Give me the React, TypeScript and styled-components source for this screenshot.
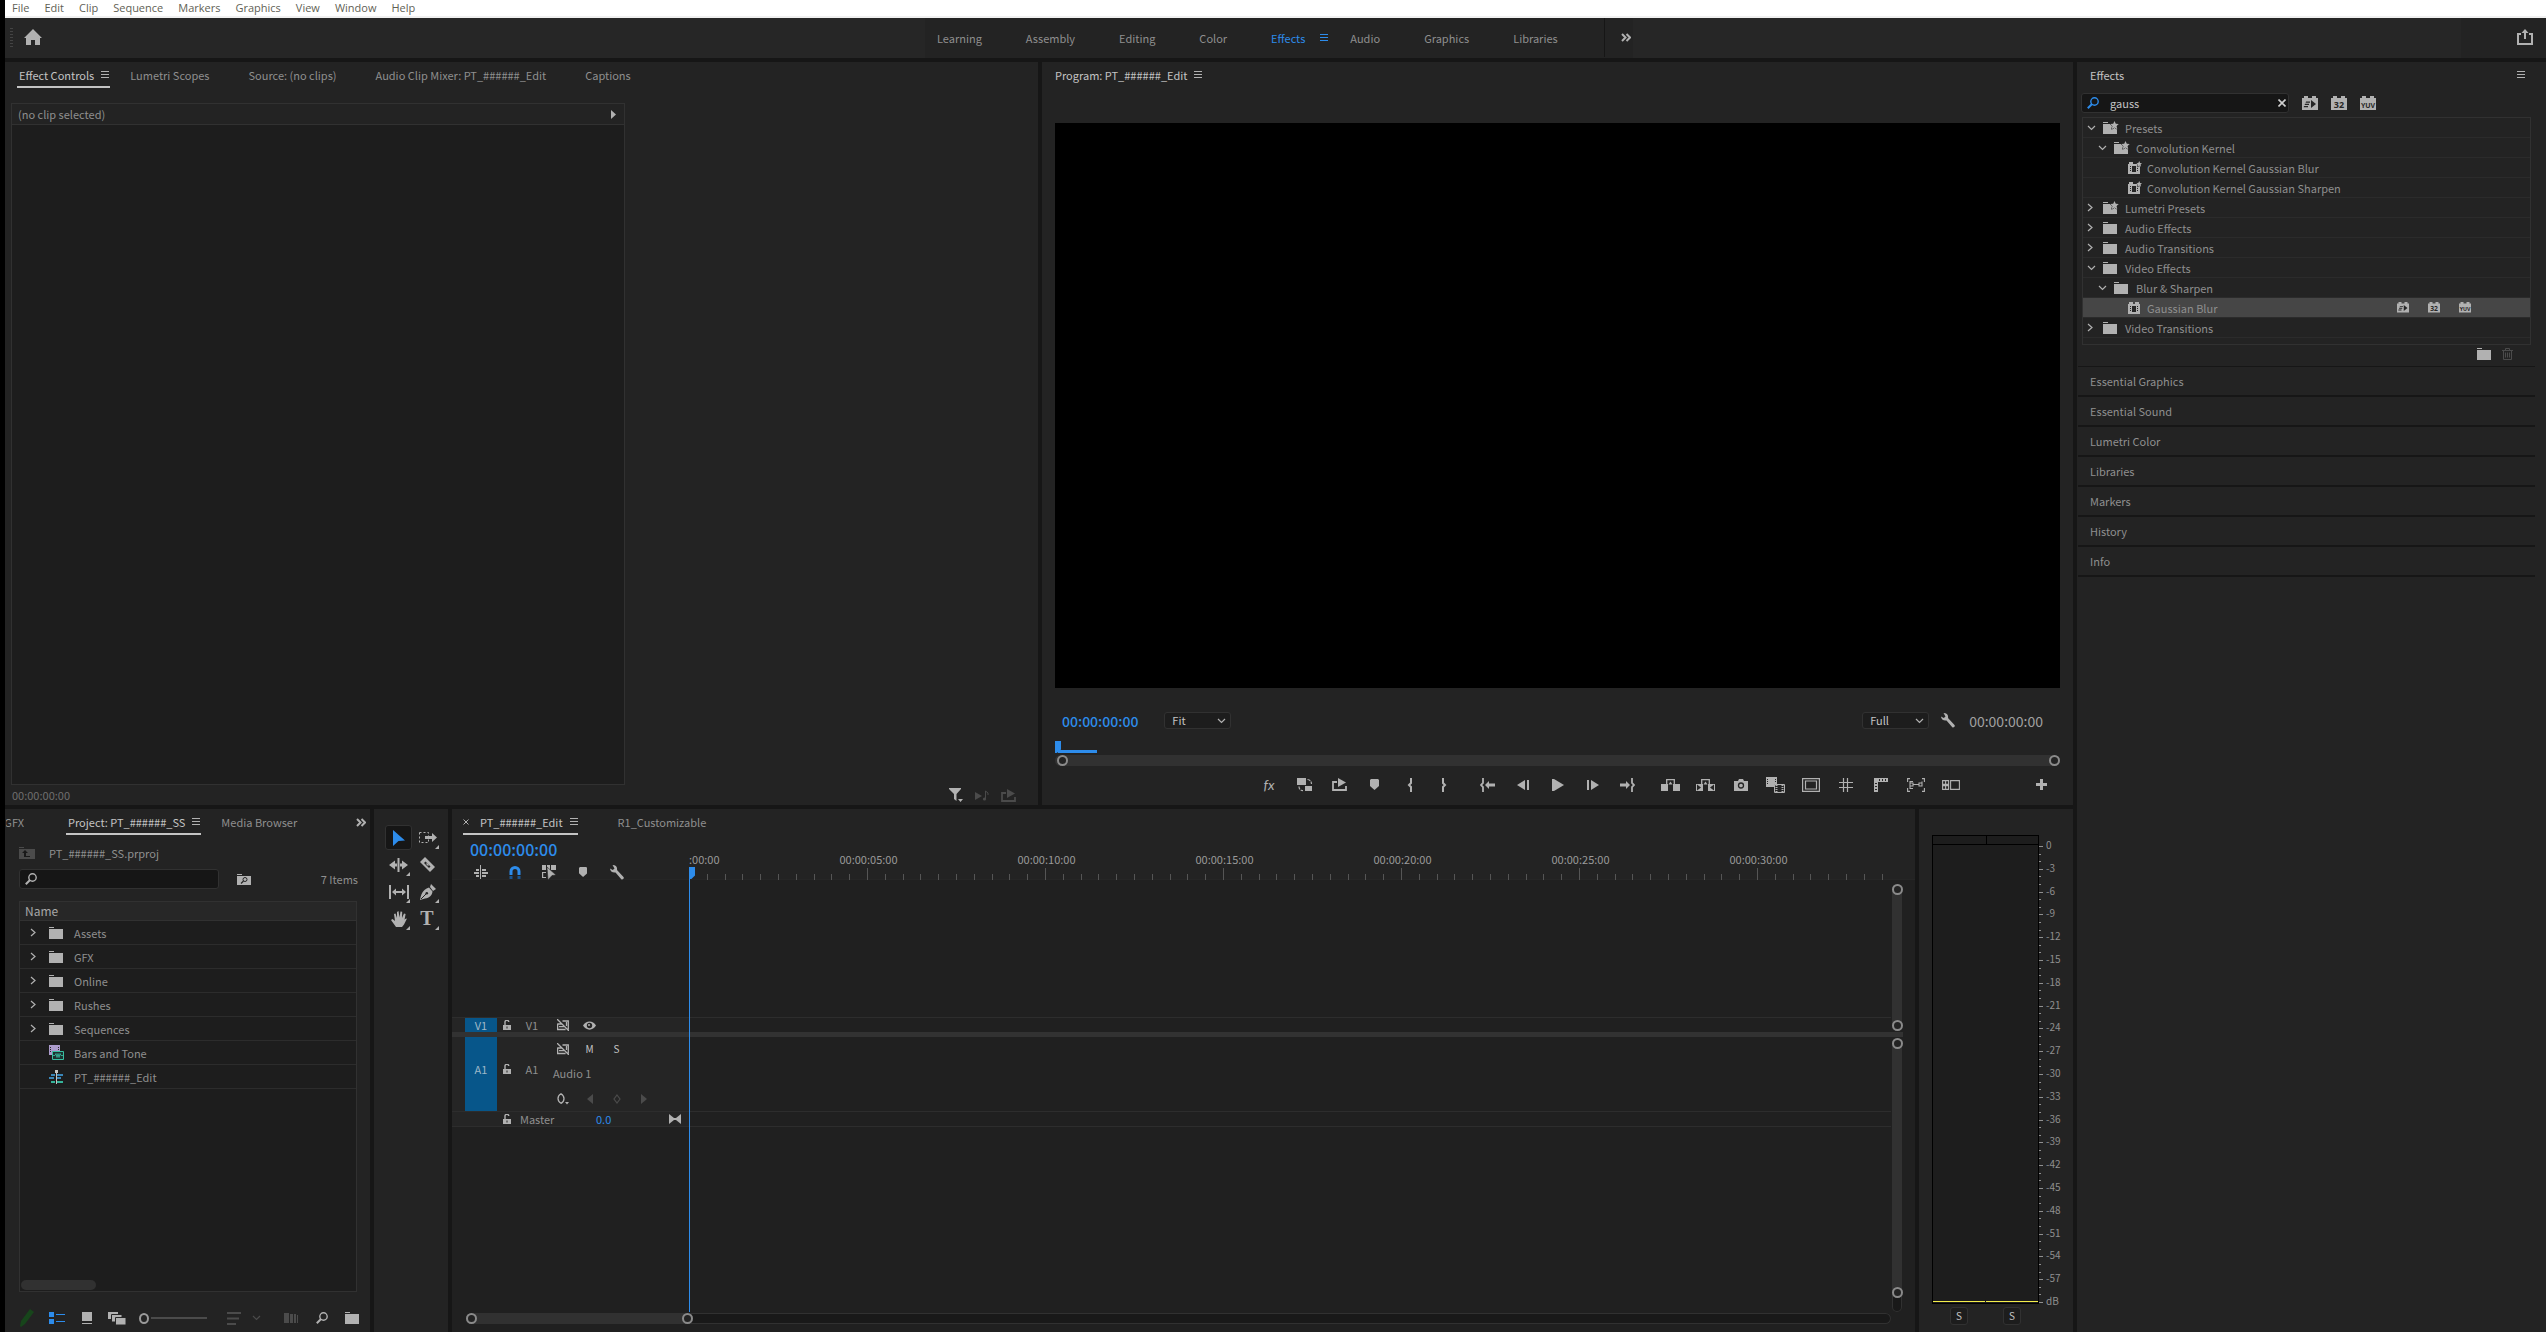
import React from "react";
import styled, { createGlobalStyle, css } from "styled-components";

const color = {
  panel: "#232323",
  bar: "#262626",
  gap: "#161616",
  well: "#1d1d1d",
  line: "#313131",
  text: "#8f8f8f",
  bright: "#c4c4c4",
  icon: "#b1b1b1",
  dim: "#4b4b4b",
  blue: "#2d8ceb",
};

const uiFont = `"Noto Sans CJK SC", "Open Sans", sans-serif`;

const Global = createGlobalStyle`
  *, *::before, *::after { box-sizing: border-box; }
  body { margin: 0; background: ${color.gap}; }
  body, button, input, select, table {
    font-family: ${uiFont};
    font-size: 11px;
    line-height: 16px;
    color: ${color.text};
  }
  button { background: none; border: 0; padding: 0; margin: 0; cursor: default; }
  ul { list-style: none; margin: 0; padding: 0; }
  svg { display: block; flex: none; }
`;

/* ---------- icons ---------- */

type IconDef = { w: number; h: number; art: React.ReactNode };
const dark = "#262626";
const brick = <path d="M0 2h2V0h4v2h4V0h4v2h2v12H0z" />;
const brickText = (size: number, label: string) => (
  <text x="8" y="12" textAnchor="middle" fontFamily="Open Sans, sans-serif" fontWeight="700" fontSize={size} fill={dark}>
    {label}
  </text>
);

const icons: Record<string, IconDef> = {
  home: { w: 18, h: 16, art: <path d="M9 0 18 9h-2v7h-5v-5H7v5H2V9H0z" /> },
  share: {
    w: 16, h: 16,
    art: <><path d="M4 5H1v10h14V5h-3" fill="none" stroke="currentColor" strokeWidth="2" /><path d="M8 0l3.5 4H9v6H7V4H4.5z" /></>,
  },
  menu: { w: 8, h: 8, art: <path d="M0 0h8v1H0zM0 3h8v1H0zM0 6h8v1H0z" /> },
  more: { w: 10, h: 9, art: <path d="M1 1l3.5 3.5L1 8M5.5 1 9 4.5 5.500 8" fill="none" stroke="currentColor" strokeWidth="2" /> },
  right: { w: 6, h: 9, art: <path d="M1 1l4 3.5L1 8" fill="none" stroke="currentColor" strokeWidth="1.2" /> },
  down: { w: 9, h: 6, art: <path d="M1 1l3.5 3.5L8 1" fill="none" stroke="currentColor" strokeWidth="1.2" /> },
  tri: { w: 5, h: 9, art: <path d="M0 0l5 4.5L0 9z" /> },
  triLeft: { w: 6, h: 10, art: <path d="M6 0v10L0 5z" /> },
  triRight: { w: 6, h: 10, art: <path d="M0 0v10l6-5z" /> },
  folder: { w: 14, h: 12, art: <path d="M0 0h5v1H0zM0 2h14v10H0z" /> },
  starFolder: {
    w: 16, h: 13,
    art: <><path d="M0 1h5v1H0zM0 3h14v10H0z" /><path d="M11.500 0l1.300 2.700 3 .3-2.300 2 .8 3.200-2.800-1.700-2.800 1.700.8-3.200-2.300-2 3-.3z" stroke={color.panel} strokeWidth="1" paintOrder="stroke" /></>,
  },
  upFolder: {
    w: 16, h: 12,
    art: <><path d="M0 0h5v1H0zM0 2h16v10H0z" /><path d="M3 6l3-3 3 3H7v3h4v1H5V6z" fill="#191919" /></>,
  },
  findFolder: {
    w: 14, h: 11,
    art: <><path d="M0 0h5v1H0zM0 2h14v9H0z" /><circle cx="8" cy="5.500" r="2" fill="none" stroke={dark} /><path d="M6.500 7 4 9.500" stroke={dark} strokeWidth="1.300" /></>,
  },
  effect: {
    w: 12, h: 12,
    art: <><path d="M0 2h1V0h4v2h2V0h4v2h1v10H0z" /><path d="M2 4h1v1H2zM2 6h1v1H2zM2 8h1v1H2zM9 4h1v1H9zM9 6h1v1H9zM9 8h1v1H9zM4 4h4v6H4z" fill={dark} /></>,
  },
  starEffect: {
    w: 14, h: 13,
    art: <><path d="M0 3h1V1h4v2h7v10H0z" /><path d="M2 5h1v1H2zM2 7h1v1H2zM2 9h1v1H2zM9 7h1v1H9zM9 9h1v1H9zM4 5h4v6H4z" fill={dark} /><path d="M11.200 0l.9 2 1.900.2-1.400 1.400.4 2.200-1.800-1.200L9.400 5.800l.4-2.200-1.400-1.400 1.900-.2z" stroke={color.panel} strokeWidth="1" paintOrder="stroke" /></>,
  },
  accel: {
    w: 16, h: 14,
    art: <>{brick}<path d="M9 4l5 4-5 4zM4 5.500h4v1.200H3.600zM3 7.700h4v1.200H2.600zM2 10h4v1.200H1.700z" fill={dark} /></>,
  },
  bits: { w: 16, h: 14, art: <>{brick}{brickText(9, "32")}</> },
  yuv: { w: 16, h: 14, art: <>{brick}{brickText(7, "YUV")}</> },
  search: {
    w: 12, h: 12,
    art: <><circle cx="7.500" cy="4.500" r="3.700" fill="none" stroke="currentColor" strokeWidth="1.400" /><path d="M5 7 .8 11.300" stroke="currentColor" strokeWidth="2" /></>,
  },
  close: { w: 8, h: 8, art: <path d="M.5.5l7 7M7.500.5l-7 7" stroke="currentColor" strokeWidth="1.600" /> },
  closeTab: { w: 6, h: 6, art: <path d="M.5.5l5 5M5.500.5l-5 5" stroke="currentColor" /> },
  trash: {
    w: 11, h: 12,
    art: <path d="M0 2.500h11M3.500 2V.5h4V2M1.500 3v8.500h8V3M3.500 4.500v5M5.500 4.500v5M7.500 4.500v5" fill="none" stroke="currentColor" />,
  },
  filter: { w: 14, h: 14, art: <path d="M0 0h12v1L7.500 6v7L5 11V6L0 1zM9 11h5l-2.500 3z" /> },
  playNote: { w: 14, h: 11, art: <><path d="M0 2l7 4-7 4z" /><path d="M10.500 9V1l2.500 2v2" fill="none" stroke="currentColor" /><circle cx="9.500" cy="9" r="1.600" /></> },
  exportClip: { w: 15, h: 13, art: <><path d="M5 4H1v8h13V8" fill="none" stroke="currentColor" strokeWidth="1.800" /><path d="M6 0l8 4.500L6 9z" /></> },
  fx: {
    w: 24, h: 24,
    art: <text x="11" y="17" textAnchor="middle" fontFamily="Lato, sans-serif" fontStyle="italic" fontSize="14">fx</text>,
  },
  proxy: {
    w: 16, h: 14,
    art: <><path d="M0 0h9v7H0zM8 8h7v5H8z" /><path d="M10.500 1.500c2.500.2 4 2 4 4.500M2 8.500c0 2.500 1.500 4 4 4.200" fill="none" stroke="currentColor" strokeWidth="1.200" strokeDasharray="3 1" /></>,
  },
  marker: { w: 9, h: 11, art: <path d="M0 1l1-1h7l1 1v6l-4.500 4L0 7z" /> },
  braceL: { w: 5, h: 14, art: <path d="M4 0v5L2 7l2 2v5" fill="none" stroke="currentColor" strokeWidth="2" /> },
  braceR: { w: 5, h: 14, art: <path d="M1 0v5l2 2-2 2v5" fill="none" stroke="currentColor" strokeWidth="2" /> },
  goIn: { w: 15, h: 14, art: <><path d="M3 0v5L1 7l2 2v5" fill="none" stroke="currentColor" strokeWidth="1.800" /><path d="M5 7l4-4v2.500h6v3H9V11z" /></> },
  goOut: { w: 15, h: 14, art: <><path d="M12 0v5l2 2-2 2v5" fill="none" stroke="currentColor" strokeWidth="1.800" /><path d="M10 7L6 3v2.500H0v3h6V11z" /></> },
  stepBack: { w: 12, h: 10, art: <path d="M8 0v10L0 5zM10 0h2v10h-2z" /> },
  stepFwd: { w: 12, h: 10, art: <path d="M4 0v10l8-5zM0 0h2v10H0z" /> },
  play: { w: 12, h: 12, art: <path d="M0 0h2l10 6-10 6H0z" /> },
  lift: {
    w: 19, h: 12,
    art: <><path d="M0 5h7v7H0zM12 5h7v7h-7z" /><path d="M5.700 6V.7h7.600V6" fill="none" stroke="currentColor" strokeWidth="1.300" /><path d="M9.500 2.500l2 3h-4z" /></>,
  },
  extract: {
    w: 19, h: 12,
    art: <><path d="M0 5h7v7H0zM12 5h7v7h-7z" /><path d="M5.700 6V.7h7.600V6" fill="none" stroke="currentColor" strokeWidth="1.300" /><path d="M9.500 2.500l2 3h-4z" /><path d="M1 5.500l4 3-4 3zM18 5.500l-4 3 4 3z" fill={dark} /></>,
  },
  camera: { w: 14, h: 12, art: <><path d="M0 2h4l1-2h4l1 2h4v10H0z" /><circle cx="7" cy="6.500" r="2.500" fill="none" stroke={dark} strokeWidth="1.300" /></> },
  compare: {
    w: 19, h: 16,
    art: <><path d="M0 0h11v10H0z" /><path d="M1 2h1v1H1zM1 4h1v1H1zM1 6h1v1H1zM9 2h1v1H9zM9 4h1v1H9z" fill={dark} /><path d="M8.500 7.500h10v8h-10z" fill={dark} stroke="currentColor" /><path d="M10.500 8v7M16.500 8v7" fill="none" stroke="currentColor" strokeDasharray="1 1" strokeWidth="2" /></>,
  },
  safe: { w: 18, h: 14, art: <path d="M.6.6h16.800v12.800H.6zM3.500 3h11v8h-11z" fill="none" stroke="currentColor" strokeWidth="1.200" /> },
  grid: { w: 14, h: 14, art: <path d="M4.500 0v14M8.500 0v14M0 4.500h14M0 9.500h14" fill="none" stroke="currentColor" strokeWidth="1.200" /> },
  rulers: { w: 14, h: 14, art: <><path d="M0 0h14v4H4v10H0z" /><path d="M5 1h1v2H5zM8 1h1v2H8zM11 1h1v2h-1zM1 5h2v1H1zM1 8h2v1H1zM1 11h2v1H1z" fill={dark} /></> },
  vr: {
    w: 18, h: 14,
    art: <path d="M3 .6H.6V4M15 .6h2.400V4M.6 10v3.400H3M17.400 10v3.400H15M6 3.500H3v7h3M3 5h3v3H3M12 5h3v3h-3zM6 6.500h6M15 3.500v3" fill="none" stroke="currentColor" strokeWidth="1.100" />,
  },
  multicam: { w: 18, h: 10, art: <path d="M.6.6h6v3.800h-6zM.6 5.600h6v3.800h-6zM3.600.6v8.800M8.600.6h8.800v8.800H8.600z" fill="none" stroke="currentColor" strokeWidth="1.100" /> },
  plus: { w: 11, h: 11, art: <path d="M4 0h3v4h4v3H7v4H4V7H0V4h4z" /> },
  wrench: {
    w: 14, h: 15,
    art: <path d="M2.500 0C6 0 7.500 2 7 5l6.500 7c1 1.200-1 3.200-2.200 2.200L5.500 7.500C2.500 8 0 6 0 3.500l2.800 1.600 1.700-1.600z" />,
  },
  pencil: { w: 14, h: 18, art: <path d="M10 0l4 3-9 12-4 3-1-1 1-5z" fill="#17451b" /> },
  list: { w: 16, h: 12, art: <path d="M0 0h5v5H0zM0 7h5v5H0zM7 2h9v1H7zM7 9h9v1H7z" /> },
  thumb: { w: 10, h: 13, art: <path d="M0 0h10v9H0zM0 11h10v1H0z" /> },
  freeform: {
    w: 18, h: 13,
    art: <><path d="M0 0h10v7H0z" /><path d="M3.500 2.500h10.500V10H3.500z" stroke={dark} /><path d="M7.500 5.500H18V13H7.500z" stroke={dark} /></>,
  },
  sort: { w: 14, h: 13, art: <path d="M0 0h14v2H0zM0 5.500h12v2H0zM0 11h9v2H0z" /> },
  automate: { w: 15, h: 10, art: <path d="M0 0h5v10H0zM6 1h3v9H6zM10 1h2v9h-2zM13 2h1v8h-1z" /> },
  barsTone: {
    w: 15, h: 15,
    art: <><path d="M0 0h11v10H0z" fill="#ab9bcb" /><path d="M1 2h1v1H1zM1 4h1v1H1zM1 6h1v1H1zM9 2h1v1H9zM9 4h1v1H9z" fill={dark} /><path d="M3.500 6.500h11v8h-11z" fill="#1d3330" stroke="#38c0a2" /><path d="M4 10.500h2l1-2 1 4 1-4 1 4 1-4 1 2h2" fill="none" stroke="#38c0a2" strokeWidth=".8" /></>,
  },
  sequence: {
    w: 14, h: 14,
    art: <><path d="M2 4h4v2H2zM0 7h5v2H0zM8 7h4v2H8zM8 4h6v2H8z" fill="#3a86b8" /><path d="M2 11h4v2H2zM8 11h6v2H8z" fill="#35b39a" /><path d="M6 0h3v3H8v11H7V3H6z" fill="#c4c4c4" /></>,
  },
  nest: { w: 14, h: 14, art: <path d="M2 4h3v2H2zM0 7h5v2H0zM2 10h3v2H2zM8 4h4v2H8zM8 7h6v2H8zM8 10h4v2H8zM6 0h1v14H6z" /> },
  magnet: { w: 12, h: 13, art: <><path d="M2 9V5.500a4 4 0 0 1 8 0V9" fill="none" stroke="currentColor" strokeWidth="3" /><path d="M.5 10h3v3h-3zM8.500 10h3v3h-3z" fill="#1a5590" /></> },
  linked: { w: 14, h: 15, art: <><path d="M0 0h4v5H0zM5 0h3v5H5zM9 0h5v5H9z" /><path d="M4 7.500H.6v5H4" fill="none" stroke="currentColor" strokeWidth="1.200" /><path d="M5 2l9 8-4 .5L6 15z" stroke={dark} strokeWidth=".6" /></> },
  arrow: { w: 12, h: 16, art: <path d="M0 0l12 10.500-6.500.5L0 16z" /> },
  trackSelect: { w: 18, h: 12, art: <><path d="M.5.5h9v10h-9z" fill="none" stroke="currentColor" strokeDasharray="2 2" /><path d="M6 4h7V1l5 4.500L13 10V7H6z" /></> },
  ripple: { w: 19, h: 14, art: <path d="M8.500 0h2v14h-2zM0 7l6-4.500v3h2v3H6v3zM19 7l-6-4.500v3h-2v3h2v3z" /> },
  razor: { w: 15, h: 15, art: <><path d="M5 0l10 10-5 5L0 5z" /><path d="M5.500 4.500l5 5-1.500 1.500-5-5z" fill={dark} /><path d="M6.500 6.500l2 2" stroke="currentColor" strokeWidth="1.200" /></> },
  slip: { w: 20, h: 14, art: <path d="M0 0h2v14H0zM18 0h2v14h-2zM3 7l4-3.500V6h6V3.500L17 7l-4 3.500V8H7v2.500z" /> },
  pen: { w: 16, h: 16, art: <><path d="M11 0l5 5-3 2-3-4zM9 3.500L12.500 7.500c-.5 4-3 6.500-7.500 7L0 16c1-5 2-10 9-12.500z" /><path d="M1 15l5-5" stroke={dark} /><circle cx="6.800" cy="9.300" r="1.300" fill={dark} /></> },
  hand: { w: 16, h: 16, art: <path d="M5 16L0 9l1.500-1L4 10 3 3l1.500-.5L6 7V1l1.500-1L8.500 6.500 9.500.5l1.700.2L11 7l2-4.500 1.600.4L13.500 9l.5-1 2-.5-3 6-2 2.500z" /> },
  type: {
    w: 25, h: 25,
    art: <text x="12" y="19" textAnchor="middle" fontFamily="Liberation Serif, serif" fontWeight="700" fontSize="20">T</text>,
  },
  lock: { w: 8, h: 10, art: <><path d="M0 5h8v5H0z" /><path d="M2 5V2.500A1.800 1.800 0 0 1 5.800 2" fill="none" stroke="currentColor" strokeWidth="1.400" /><path d="M3.500 6.500h1v2h-1z" fill={dark} /></> },
  syncLock: { w: 12, h: 12, art: <path d="M.6 4.500v6h8M.6 5h4M2 7.700h5M5.500 2h5.800v8.500M9.500 3v4M0 0l12 12" fill="none" stroke="currentColor" strokeWidth="1.300" /> },
  eye: { w: 13, h: 9, art: <><path d="M0 4.500C3-1 10-1 13 4.500 10 10 3 10 0 4.500z" /><circle cx="6.500" cy="4.500" r="2.700" fill={dark} /><circle cx="6" cy="4" r="1" /></> },
  keyframe: { w: 12, h: 12, art: <><path d="M4 .8c4 2.500 4 7.500 0 9.500C0 8 0 3 4 .8z" fill="none" stroke="currentColor" strokeWidth="1.300" /><path d="M8 9h4l-2 2.500z" /></> },
  diamond: { w: 8, h: 10, art: <path d="M4 1l3 4-3 4-3-4z" fill="none" stroke="currentColor" strokeWidth="1.200" /> },
  bowtie: { w: 12, h: 10, art: <path d="M0 0l5 4h2l5-4v10L7 6H5l-5 4z" /> },
};

const Svg = styled.svg<{ $tone?: string }>`
  fill: currentColor;
  color: ${(p) => p.$tone || color.icon};
`;

const Icon = ({ name, tone, scale = 1 }: { name: string; tone?: string; scale?: number }) => {
  const { w, h, art } = icons[name];
  return (
    <Svg $tone={tone} width={w * scale} height={h * scale} viewBox={`0 0 ${w} ${h}`} aria-hidden="true">
      {art}
    </Svg>
  );
};

/* ---------- shared parts ---------- */

const Shell = styled.div`
  min-height: 100vh;
  display: flex;
  flex-direction: column;
  border-left: 5px solid #000;
`;

const MenuBar = styled.nav`
  display: flex;
  gap: 15px;
  height: 18px;
  padding-left: 7px;
  background: #fff;
  border-bottom: 2px solid #f0f0f0;
`;

const MenuItem = styled.button`
  font-family: "Open Sans", sans-serif;
  color: #5f5f55;
`;

const TopBar = styled.header`
  display: grid;
  grid-template-columns: 920fr 708px 913fr;
  height: 40px;
  background: ${color.bar};
`;

const TopLeft = styled.div`
  display: flex;
  align-items: center;
  gap: 11px;
  padding: 0 0 2px 5px;
`;

const Grip = styled.div`
  width: 3px;
  height: 19px;
  background: repeating-linear-gradient(#444 0 1px, transparent 1px 3px);
`;

const Workspaces = styled.nav`
  display: flex;
  align-items: center;
  padding: 0 0 1px 12px;
  background: ${color.panel};
`;

const WorkspaceButton = styled.button<{ $active?: boolean }>`
  display: flex;
  align-items: center;
  gap: 15px;
  margin-right: ${(p) => (p.$active ? 22 : 44)}px;
  color: ${(p) => (p.$active ? color.blue : color.text)};
`;

const Overflow = styled.div`
  display: flex;
  align-items: center;
  justify-content: flex-end;
  width: 29px;
  height: 100%;
  margin-left: auto;
  padding-right: 2px;
  border-left: 1px solid ${color.gap};
`;

const TopRight = styled.div`
  display: flex;
  align-items: center;
  justify-content: flex-end;
  justify-self: end;
  width: 85px;
  padding: 0 13px 2px 0;
  background: ${color.panel};
`;

const Workspace = styled.main`
  flex: 1;
  display: grid;
  grid-template-columns: minmax(0, 1fr) 469px;
  gap: 4px;
  padding-top: 4px;
`;

const Stack = styled.div`
  display: flex;
  flex-direction: column;
  gap: 4px;
`;

const UpperRow = styled.div`
  flex: 743 1 0;
  display: grid;
  grid-template-columns: 1033fr 1031fr;
  gap: 4px;
`;

const LowerRow = styled.div`
  flex: 523 1 0;
  display: grid;
  grid-template-columns: 365px 74px minmax(0, 1fr) 154px;
  gap: 4px;
`;

const Panel = styled.section`
  display: flex;
  flex-direction: column;
  min-width: 0;
  overflow: hidden;
  background: ${color.panel};
`;

const TabBar = styled.div<{ $left: number }>`
  display: flex;
  gap: 1px;
  height: 26px;
  flex: none;
  padding-left: ${(p) => p.$left}px;
`;

const Tab = styled.button<{ $active?: boolean; $underline?: boolean }>`
  display: flex;
  align-items: center;
  gap: 7px;
  height: 26px;
  padding: 2px ${(p) => (p.$active ? 0 : 19)}px 0;
  white-space: nowrap;
  color: ${(p) => (p.$active ? color.bright : color.text)};
  border-bottom: 2px solid ${(p) => (p.$underline ? color.bright : "transparent")};
  ${(p) => p.$underline && css`padding-left: 2px; padding-right: 1px;`}
`;

const Spacer = styled.div`
  flex: 1;
`;

const IconButton = styled.button<{ $w?: number; $h?: number }>`
  display: flex;
  align-items: center;
  justify-content: center;
  width: ${(p) => (p.$w ? `${p.$w}px` : "auto")};
  height: ${(p) => (p.$h ? `${p.$h}px` : "auto")};
  flex: none;
`;

const Knob = styled.div`
  width: 11px;
  height: 11px;
  flex: none;
  border: 2px solid #8a8a8a;
  border-radius: 50%;
  background: ${color.panel};
`;

const SearchBox = styled.label<{ $w: number; $gap: number }>`
  display: flex;
  align-items: center;
  gap: ${(p) => p.$gap}px;
  width: ${(p) => p.$w}px;
  height: 20px;
  padding: 0 2px 0 5px;
  background: ${color.gap};
  border: 1px solid ${color.line};
  border-radius: 3px;
`;

const SearchInput = styled.input`
  flex: 1;
  min-width: 0;
  padding: 0;
  border: 0;
  outline: 0;
  background: none;
  color: ${color.bright};
`;

const Gapped = styled.div<{ $w: number }>`
  width: ${(p) => p.$w}px;
  flex: none;
`;

/* ---------- effect controls ---------- */

const ClipWell = styled.div`
  display: flex;
  flex-direction: column;
  flex: 1;
  width: 59.4%;
  margin: 15px 0 0 6px;
  background: ${color.well};
  border: 1px solid ${color.line};
`;

const ClipHead = styled.div`
  display: flex;
  align-items: center;
  justify-content: space-between;
  height: 21px;
  padding: 0 8px 0 6px;
  background: ${color.panel};
  border-bottom: 1px solid ${color.line};
`;

const ClipFoot = styled.div`
  display: flex;
  align-items: center;
  gap: 12px;
  height: 20px;
  padding: 0 22px 0 7px;
  color: #6f6f6f;
`;

const EffectControls = () => (
  <Panel>
    <TabBar $left={12}>
      <Tab $active $underline>Effect Controls<Icon name="menu" /></Tab>
      <Tab>Lumetri Scopes</Tab>
      <Tab>Source: (no clips)</Tab>
      <Tab>Audio Clip Mixer: PT_######_Edit</Tab>
      <Tab>Captions</Tab>
    </TabBar>
    <ClipWell>
      <ClipHead>(no clip selected)<Icon name="tri" /></ClipHead>
    </ClipWell>
    <ClipFoot>
      00:00:00:00
      <Spacer />
      <IconButton aria-label="Filter properties"><Icon name="filter" /></IconButton>
      <IconButton aria-label="Play audio"><Icon name="playNote" tone={color.dim} /></IconButton>
      <IconButton aria-label="Export clip"><Icon name="exportClip" tone={color.dim} /></IconButton>
    </ClipFoot>
  </Panel>
);

/* ---------- program monitor ---------- */

const Monitor = styled.div`
  flex: 1;
  margin: 35px 13px 0;
  background: #000;
`;

const MonitorBar = styled.div`
  display: flex;
  align-items: center;
  height: 18px;
  margin: 24px 13px 0;
  padding: 0 17px 1px 7px;
`;

const Timecode = styled.span<{ $size: number; $blue?: boolean }>`
  font-size: ${(p) => p.$size}px;
  font-weight: ${(p) => (p.$blue ? 500 : 400)};
  color: ${(p) => (p.$blue ? color.blue : "#a0a0a0")};
`;

const SelectBox = styled.div`
  position: relative;
  width: 67px;
  height: 17px;
  svg { position: absolute; right: 5px; top: 6px; pointer-events: none; }
`;

const Select = styled.select`
  appearance: none;
  display: block;
  width: 100%;
  height: 17px;
  padding: 0 7px;
  line-height: 15px;
  color: ${color.bright};
  background: ${color.well};
  border: 1px solid ${color.line};
  border-radius: 3px;
`;

const Dropdown = ({ label, value }: { label: string; value: string }) => (
  <SelectBox>
    <Select aria-label={label} defaultValue={value}><option>{value}</option></Select>
    <Icon name="down" />
  </SelectBox>
);

const MiniRuler = styled.div`
  display: flex;
  align-items: flex-end;
  height: 12px;
  margin: 11px 13px 2px;
`;

const PlayMarker = styled.div`
  width: 6px;
  height: 12px;
  background: ${color.blue};
  clip-path: polygon(0 0, 100% 0, 100% 70%, 30% 100%, 0 100%);
`;

const WorkLine = styled.div`
  width: 39px;
  height: 3px;
  margin-left: -3px;
  background: ${color.blue};
`;

const MiniScroll = styled.div`
  display: flex;
  justify-content: space-between;
  height: 11px;
  margin: 0 13px;
  padding: 0 0 0 2px;
  background: ${color.line};
  border-radius: 6px;
`;

const Transport = styled.div`
  display: flex;
  align-items: center;
  height: 39px;
  padding: 0 23px 2px 20.4%;
`;

const Group = styled.div`
  display: flex;
  margin-right: 8px;
`;

const transport = [
  ["fx", "proxy", "exportClip", "marker", "braceL", "braceR"],
  ["goIn", "stepBack", "play", "stepFwd", "goOut"],
  ["lift", "extract", "camera", "compare", "safe", "grid", "rulers", "vr", "multicam"],
];

const Program = () => (
  <Panel>
    <TabBar $left={13}>
      <Tab $active>Program: PT_######_Edit<Icon name="menu" /></Tab>
    </TabBar>
    <Monitor />
    <MonitorBar>
      <Timecode $size={14} $blue>00:00:00:00</Timecode>
      <Gapped $w={26} />
      <Dropdown label="Zoom level" value="Fit" />
      <Spacer />
      <Dropdown label="Playback resolution" value="Full" />
      <Gapped $w={12} />
      <IconButton aria-label="Settings"><Icon name="wrench" /></IconButton>
      <Gapped $w={14} />
      <Timecode $size={14}>00:00:00:00</Timecode>
    </MonitorBar>
    <MiniRuler><PlayMarker /><WorkLine /></MiniRuler>
    <MiniScroll><Knob /><Knob /></MiniScroll>
    <Transport>
      {transport.map((names, i) => (
        <Group key={i}>
          {names.map((n) => (
            <IconButton key={n} $w={35} $h={24} aria-label={n}><Icon name={n} /></IconButton>
          ))}
        </Group>
      ))}
      <Spacer />
      <IconButton $w={18} $h={18} aria-label="Button editor"><Icon name="plus" /></IconButton>
    </Transport>
  </Panel>
);

/* ---------- effects ---------- */

const EffectsTitle = styled.div`
  display: flex;
  align-items: center;
  justify-content: space-between;
  height: 31px;
  padding: 0 21px 5px 13px;
  color: ${color.bright};
`;

const SearchRow = styled.div`
  display: flex;
  align-items: center;
  gap: 13px;
  padding-left: 4px;
`;

const Tree = styled.ul`
  && { margin: 4px 15px 0 5px; padding-bottom: 6px; }
  border: 1px solid ${color.line};
`;

const TreeRow = styled.li<{ $level: number; $on?: boolean }>`
  display: flex;
  align-items: center;
  height: 20px;
  padding-left: ${(p) => 4 + p.$level * 11}px;
  padding-right: 59px;
  border-bottom: 1px solid #2b2b2b;
  background: ${(p) => (p.$on ? "#464646" : "none")};
`;

const Twist = styled.button`
  width: 16px;
  height: 16px;
  flex: none;
  display: flex;
  align-items: center;
`;

const Glyph = styled.span<{ $leaf: boolean }>`
  width: ${(p) => (p.$leaf ? 19 : 22)}px;
  flex: none;
`;

const Badges = styled.span`
  display: flex;
  gap: 19px;
  margin-left: auto;
`;

const tree: [number, string, string, string][] = [
  [0, "down", "starFolder", "Presets"],
  [1, "down", "starFolder", "Convolution Kernel"],
  [2, "", "starEffect", "Convolution Kernel Gaussian Blur"],
  [2, "", "starEffect", "Convolution Kernel Gaussian Sharpen"],
  [0, "right", "starFolder", "Lumetri Presets"],
  [0, "right", "folder", "Audio Effects"],
  [0, "right", "folder", "Audio Transitions"],
  [0, "down", "folder", "Video Effects"],
  [1, "down", "folder", "Blur & Sharpen"],
  [2, "", "effect", "Gaussian Blur"],
  [0, "right", "folder", "Video Transitions"],
];

const EffectsFoot = styled.div`
  display: flex;
  align-items: center;
  justify-content: flex-end;
  gap: 11px;
  height: 21px;
  padding: 0 33px 3px 0;
`;

const Drawers = styled.div`
  margin: 0 11px 0 1px;
  border-top: 1px solid ${color.gap};
`;

const Drawer = styled.button`
  display: block;
  width: 100%;
  height: 30px;
  padding: 0 12px;
  text-align: left;
  border-bottom: 2px solid ${color.gap};
`;

const drawers = ["Essential Graphics", "Essential Sound", "Lumetri Color", "Libraries", "Markers", "History", "Info"];

const Effects = () => (
  <Panel>
    <EffectsTitle>Effects<IconButton aria-label="Panel menu"><Icon name="menu" /></IconButton></EffectsTitle>
    <SearchRow>
      <SearchBox $w={208} $gap={11}>
        <Icon name="search" tone={color.blue} />
        <SearchInput aria-label="Search effects" defaultValue="gauss" />
        <IconButton aria-label="Clear search"><Icon name="close" tone="#d0d0d0" /></IconButton>
      </SearchBox>
      <IconButton $w={16} aria-label="Accelerated effects"><Icon name="accel" /></IconButton>
      <IconButton $w={16} aria-label="32-bit effects"><Icon name="bits" /></IconButton>
      <IconButton $w={16} aria-label="YUV effects"><Icon name="yuv" /></IconButton>
    </SearchRow>
    <Tree>
      {tree.map(([level, twist, glyph, label]) => (
        <TreeRow key={label} $level={level} $on={label === "Gaussian Blur"}>
          {twist ? <Twist aria-label={`Toggle ${label}`}><Icon name={twist} /></Twist> : <Gapped $w={19} />}
          <Glyph $leaf={level === 2}><Icon name={glyph} /></Glyph>
          {label}
          {label === "Gaussian Blur" && (
            <Badges><Icon name="accel" scale={0.75} /><Icon name="bits" scale={0.75} /><Icon name="yuv" scale={0.75} /></Badges>
          )}
        </TreeRow>
      ))}
    </Tree>
    <EffectsFoot>
      <IconButton aria-label="New custom bin"><Icon name="folder" /></IconButton>
      <IconButton aria-label="Delete"><Icon name="trash" tone={color.dim} /></IconButton>
    </EffectsFoot>
    <Drawers>{drawers.map((d) => <Drawer key={d}>{d}</Drawer>)}</Drawers>
  </Panel>
);

/* ---------- project ---------- */

const ClippedTab = styled.button`
  display: flex;
  justify-content: flex-end;
  align-items: center;
  width: 18px;
  margin-right: 41px;
  overflow: hidden;
`;

const MoreTabs = styled.button`
  margin: 1px 4px 0 auto;
`;

const ProjectPath = styled.div`
  display: flex;
  align-items: center;
  gap: 14px;
  height: 34px;
  padding: 1px 14px 0;
`;

const ProjectSearch = styled.div`
  display: flex;
  align-items: center;
  gap: 18px;
  height: 20px;
  padding: 0 12px 0 14px;
`;

const BinWell = styled.div`
  display: flex;
  flex-direction: column;
  justify-content: space-between;
  flex: 1;
  margin: 12px 13px 0 14px;
  background: ${color.well};
  border: 1px solid ${color.line};
`;

const BinTable = styled.table`
  width: 100%;
  border-collapse: separate;
  border-spacing: 0;
`;

const BinHead = styled.th`
  height: 19px;
  padding: 0 5px;
  text-align: left;
  font-size: 12px;
  font-weight: 400;
  color: #a8a8a8;
  background: #272727;
  border-bottom: 1px solid ${color.line};
`;

const BinCell = styled.td`
  height: 24px;
  padding: 0;
  border-bottom: 1px solid #2c2c2c;
`;

const BinLine = styled.div`
  display: flex;
  align-items: center;
  padding-left: 10px;
`;

const BinTwist = styled.div`
  width: 19px;
`;

const BinGlyph = styled.div`
  width: 25px;
`;

const ScrollThumb = styled.div`
  width: 75px;
  height: 10px;
  margin: 0 0 1px 1px;
  border-radius: 5px;
  background: ${color.line};
`;

const ProjectFoot = styled.div`
  display: flex;
  align-items: center;
  height: 40px;
  padding: 12px 11px 0 15px;
`;

const ZoomSlider = styled.input`
  appearance: none;
  width: 68px;
  height: 12px;
  margin: 0 20px 0 13px;
  background: linear-gradient(${color.dim}, ${color.dim}) right center / 56px 2px no-repeat;
  &::-webkit-slider-thumb {
    appearance: none;
    width: 10px;
    height: 11px;
    border: 2px solid #9a9a9a;
    border-radius: 50%;
    background: ${color.panel};
  }
`;

const items = ["Assets", "GFX", "Online", "Rushes", "Sequences"];

const Project = () => (
  <Panel>
    <TabBar $left={1}>
      <ClippedTab>GFX</ClippedTab>
      <Tab $active $underline>Project: PT_######_SS<Icon name="menu" /></Tab>
      <Tab>Media Browser</Tab>
      <MoreTabs aria-label="More panels"><Icon name="more" /></MoreTabs>
    </TabBar>
    <ProjectPath><Icon name="upFolder" tone={color.dim} />PT_######_SS.prproj</ProjectPath>
    <ProjectSearch>
      <SearchBox $w={200} $gap={8}>
        <Icon name="search" />
        <SearchInput aria-label="Search project" />
      </SearchBox>
      <IconButton aria-label="New search bin"><Icon name="findFolder" /></IconButton>
      <Spacer />
      7 Items
    </ProjectSearch>
    <BinWell>
      <BinTable>
        <thead><tr><BinHead scope="col">Name</BinHead></tr></thead>
        <tbody>
          {items.map((n) => (
            <tr key={n}><BinCell><BinLine>
              <BinTwist><Icon name="right" /></BinTwist>
              <BinGlyph><Icon name="folder" /></BinGlyph>{n}
            </BinLine></BinCell></tr>
          ))}
          <tr><BinCell><BinLine><BinTwist /><BinGlyph><Icon name="barsTone" /></BinGlyph>Bars and Tone</BinLine></BinCell></tr>
          <tr><BinCell><BinLine><BinTwist /><BinGlyph><Icon name="sequence" /></BinGlyph>PT_######_Edit</BinLine></BinCell></tr>
        </tbody>
      </BinTable>
      <ScrollThumb />
    </BinWell>
    <ProjectFoot>
      <IconButton $w={14} aria-label="Writable"><Icon name="pencil" /></IconButton>
      <Gapped $w={15} />
      <IconButton $w={16} aria-label="List view"><Icon name="list" tone={color.blue} /></IconButton>
      <Gapped $w={17} />
      <IconButton $w={10} aria-label="Icon view"><Icon name="thumb" /></IconButton>
      <Gapped $w={16} />
      <IconButton $w={18} aria-label="Freeform view"><Icon name="freeform" /></IconButton>
      <ZoomSlider type="range" min={0} max={100} defaultValue={0} aria-label="Thumbnail size" />
      <IconButton $w={14} aria-label="Sort"><Icon name="sort" tone={color.dim} /></IconButton>
      <Gapped $w={11} />
      <IconButton $w={9} aria-label="Sort options"><Icon name="down" tone={color.dim} /></IconButton>
      <Spacer />
      <IconButton $w={15} aria-label="Automate to sequence"><Icon name="automate" tone={color.dim} /></IconButton>
      <Gapped $w={17} />
      <IconButton $w={12} aria-label="Find"><Icon name="search" /></IconButton>
      <Gapped $w={17} />
      <IconButton $w={14} aria-label="New bin"><Icon name="folder" /></IconButton>
    </ProjectFoot>
  </Panel>
);

/* ---------- tools ---------- */

const ToolGrid = styled.div`
  display: grid;
  grid-template-columns: 27px 27px;
  grid-auto-rows: 25px;
  gap: 2px;
  padding: 16px 0 0 11px;
`;

const Tool = styled.button<{ $on?: boolean; $more?: boolean }>`
  position: relative;
  display: flex;
  align-items: center;
  justify-content: center;
  border-radius: 3px;
  ${(p) => p.$on && css`background: ${color.gap}; border: 1px solid ${color.line};`}
  ${(p) => p.$more && css`
    &::after {
      content: "";
      position: absolute;
      right: 2px;
      bottom: 1px;
      border: 2px solid transparent;
      border-right-color: ${color.icon};
      border-bottom-color: ${color.icon};
    }
  `}
`;

const tools: [string, boolean][] = [
  ["arrow", false], ["trackSelect", true], ["ripple", true], ["razor", false],
  ["slip", true], ["pen", true], ["hand", true], ["type", true],
];

const Tools = () => (
  <Panel>
    <ToolGrid>
      {tools.map(([n, more]) => (
        <Tool key={n} $on={n === "arrow"} $more={more} aria-label={n}>
          <Icon name={n} tone={n === "arrow" ? color.blue : undefined} />
        </Tool>
      ))}
    </ToolGrid>
  </Panel>
);

/* ---------- timeline ---------- */

const SeqTab = styled(Tab)`
  && { padding: 2px 0 0; }
  margin-right: 39px;
`;

const SeqName = styled.span`
  padding-left: 4px;
`;

const PlainTab = styled(Tab)`
  padding: 2px 0 0;
`;

const HeadRow = styled.div`
  display: grid;
  grid-template-columns: 237px minmax(0, 1fr) 24px;
  height: 45px;
  flex: none;
  border-bottom: 1px solid #262626;
`;

const HeadTools = styled.div`
  display: flex;
  flex-direction: column;
  padding: 4px 0 0 18px;
`;

const HeadTime = styled(Timecode)`
  line-height: 21px;
`;

const HeadIcons = styled.div`
  display: flex;
  height: 24px;
  margin-left: -6px;
`;

const Ruler = styled.div`
  display: flex;
  overflow: hidden;
  padding-top: 16px;
`;

const Mark = styled.div`
  flex: none;
  width: 178px;
`;

const MarkLabel = styled.div<{ $first?: boolean }>`
  height: 17px;
  padding-left: ${(p) => (p.$first ? 0 : 3)}px;
  text-align: ${(p) => (p.$first ? "left" : "center")};
  margin-left: ${(p) => (p.$first ? 0 : -178)}px;
  color: #9a9a9a;
`;

const Ticks = styled.div`
  display: flex;
  align-items: flex-end;
  height: 12px;
`;

const Tick = styled.div<{ $major?: boolean }>`
  flex: 1;
  height: ${(p) => (p.$major ? 12 : 6)}px;
  border-left: 1px solid #555;
`;

const TimeBody = styled.div`
  position: relative;
  flex: 1;
  display: flex;
  flex-direction: column;
  background: #202020;
`;

const VideoHalf = styled.div`
  display: flex;
  flex: none;
  height: 152px;
`;

const AudioHalf = styled.div`
  display: flex;
  flex: 1;
`;

const Lanes = styled.div<{ $end?: boolean }>`
  flex: 1;
  display: flex;
  flex-direction: column;
  justify-content: ${(p) => (p.$end ? "flex-end" : "flex-start")};
`;

const Lane = styled.div<{ $h: number }>`
  display: flex;
  height: ${(p) => p.$h}px;
  border-top: 1px solid #2d2d2d;
`;

const LaneEdge = styled.div`
  height: 1px;
  background: #2d2d2d;
`;

const FirstLane = styled(Lane)`
  border-top: 0;
`;

const LaneHead = styled.div`
  display: flex;
  align-items: center;
  width: 237px;
  padding-left: 13px;
  background: #252525;
`;

const LaneIds = styled.div<{ $raised?: boolean }>`
  display: flex;
  align-items: center;
  align-self: stretch;
  button { padding-bottom: ${(p) => (p.$raised ? 10 : 0)}px; }
`;

const Patch = styled.button<{ $on?: boolean }>`
  align-self: stretch;
  width: 32px;
  line-height: 14px;
  color: #9fb8c8;
  background: ${(p) => (p.$on ? "#07568a" : "none")};
`;

const TrackName = styled.button`
  width: 30px;
  line-height: 14px;
`;

const HalfSplit = styled.div`
  height: 5px;
  margin-right: 12px;
  flex: none;
  background: #323232;
`;

const AudioControls = styled.div`
  display: grid;
  grid-template-rows: 23px 26px 25px;
  align-items: center;
  padding-left: 2px;
`;

const AudioName = styled.span`
  padding-left: 4px;
`;

const ControlLine = styled.div`
  display: flex;
`;

const LetterButton = styled.button`
  width: 27px;
  font-size: 10px;
  line-height: 14px;
  color: ${color.bright};
`;

const MasterName = styled.span`
  width: 76px;
`;

const Level = styled.span`
  flex: 1;
  color: ${color.blue};
`;

const VScroll = styled.div<{ $tail: number }>`
  width: 24px;
  padding: ${(p) => (p.$tail ? 1 : 4)}px 13px 1px 1px;
`;

const VTrough = styled.div<{ $tail: number }>`
  height: 100%;
  width: 10px;
  padding-bottom: ${(p) => p.$tail}px;
  border-radius: 5px;
  background: #191919;
  box-shadow: inset 0 0 0 1px ${color.line};
`;

const VThumb = styled.div`
  display: flex;
  flex-direction: column;
  justify-content: space-between;
  width: 10px;
  height: 100%;
  border-radius: 5px;
  background: ${color.line};
`;

const HTrough = styled.div`
  display: flex;
  height: 11px;
  margin: 0 24px 8px 14px;
  border-radius: 6px;
  background: #191919;
  box-shadow: inset 0 0 0 1px ${color.line};
`;

const HThumb = styled.div`
  display: flex;
  justify-content: space-between;
  width: 227px;
  height: 11px;
  border-radius: 6px;
  background: ${color.line};
`;

const Playhead = styled.div`
  position: absolute;
  left: 237px;
  top: -13px;
  bottom: 20px;
  width: 1px;
  background: ${color.blue};
  &::before {
    content: "";
    position: absolute;
    left: 0;
    top: 0;
    width: 6px;
    height: 12px;
    background: ${color.blue};
    clip-path: polygon(0 0, 100% 0, 100% 70%, 40% 100%, 0 100%);
  }
`;

const marks = [":00:00", "00:00:05:00", "00:00:10:00", "00:00:15:00", "00:00:20:00", "00:00:25:00", "00:00:30:00"];

const Timeline = () => (
  <Panel>
    <TabBar $left={11}>
      <SeqTab $active $underline>
        <Icon name="closeTab" /><SeqName>PT_######_Edit</SeqName><Icon name="menu" />
      </SeqTab>
      <PlainTab>R1_Customizable</PlainTab>
    </TabBar>
    <HeadRow>
      <HeadTools>
        <HeadTime $size={16} $blue>00:00:00:00</HeadTime>
        <HeadIcons>
          <IconButton $w={34} $h={24} aria-label="Nest"><Icon name="nest" /></IconButton>
          <IconButton $w={34} $h={24} aria-label="Snap"><Icon name="magnet" tone={color.blue} /></IconButton>
          <IconButton $w={34} $h={24} aria-label="Linked selection"><Icon name="linked" /></IconButton>
          <IconButton $w={34} $h={24} aria-label="Add marker"><Icon name="marker" scale={0.9} /></IconButton>
          <IconButton $w={34} $h={24} aria-label="Timeline settings"><Icon name="wrench" /></IconButton>
        </HeadIcons>
      </HeadTools>
      <Ruler>
        {marks.map((m, i) => (
          <Mark key={m}>
            <MarkLabel $first={i === 0}>{m}</MarkLabel>
            <Ticks>
              {Array.from({ length: 10 }, (_, k) => <Tick key={k} $major={k === 0} />)}
            </Ticks>
          </Mark>
        ))}
      </Ruler>
    </HeadRow>
    <TimeBody>
      <VideoHalf>
        <Lanes $end>
          <Lane $h={15}>
            <LaneHead>
              <LaneIds>
                <Patch $on>V1</Patch>
                <IconButton $w={20} aria-label="Lock V1"><Icon name="lock" /></IconButton>
                <TrackName>V1</TrackName>
              </LaneIds>
              <Gapped $w={2} />
              <IconButton $w={27} aria-label="Sync lock V1"><Icon name="syncLock" /></IconButton>
              <IconButton $w={27} aria-label="Toggle output V1"><Icon name="eye" /></IconButton>
            </LaneHead>
          </Lane>
        </Lanes>
        <VScroll $tail={0}><VTrough $tail={0}><VThumb><Knob /><Knob /></VThumb></VTrough></VScroll>
      </VideoHalf>
      <HalfSplit />
      <AudioHalf>
        <Lanes>
          <FirstLane $h={74}>
            <LaneHead>
              <LaneIds $raised>
                <Patch $on>A1</Patch>
                <IconButton $w={20} aria-label="Lock A1"><Icon name="lock" /></IconButton>
                <TrackName>A1</TrackName>
              </LaneIds>
              <AudioControls>
                <ControlLine>
                  <IconButton $w={27} aria-label="Sync lock A1"><Icon name="syncLock" /></IconButton>
                  <LetterButton>M</LetterButton>
                  <LetterButton>S</LetterButton>
                </ControlLine>
                <AudioName>Audio 1</AudioName>
                <ControlLine>
                  <IconButton $w={27} aria-label="Show keyframes"><Icon name="keyframe" /></IconButton>
                  <IconButton $w={27} aria-label="Previous keyframe"><Icon name="triLeft" tone={color.dim} /></IconButton>
                  <IconButton $w={27} aria-label="Add keyframe"><Icon name="diamond" tone={color.dim} /></IconButton>
                  <IconButton $w={27} aria-label="Next keyframe"><Icon name="triRight" tone={color.dim} /></IconButton>
                </ControlLine>
              </AudioControls>
            </LaneHead>
          </FirstLane>
          <Lane $h={15}>
            <LaneHead>
              <Gapped $w={32} />
              <IconButton $w={20} aria-label="Lock master"><Icon name="lock" /></IconButton>
              <Gapped $w={3} />
              <MasterName>Master</MasterName>
              <Level>0.0</Level>
              <Icon name="bowtie" />
              <Gapped $w={8} />
            </LaneHead>
          </Lane>
          <LaneEdge />
        </Lanes>
        <VScroll $tail={1}><VTrough $tail={14}><VThumb><Knob /><Knob /></VThumb></VTrough></VScroll>
      </AudioHalf>
      <HTrough><HThumb><Knob /><Knob /></HThumb></HTrough>
      <Playhead />
    </TimeBody>
  </Panel>
);

/* ---------- audio meters ---------- */

const MeterRow = styled.div`
  display: flex;
  flex: 1;
  margin: 26px 0 0 13px;
`;

const MeterBox = styled.div`
  display: flex;
  flex-direction: column;
  width: 107px;
  padding-bottom: 1px;
  border: 1px solid #000;
  background: ${color.well};
`;

const ClipLights = styled.div`
  display: grid;
  grid-template-columns: 1fr 1fr;
  height: 9px;
  border-bottom: 1px solid #000;
`;

const ClipLight = styled.button`
  & + & { border-left: 1px solid #000; }
`;

const Floor = styled.div`
  display: grid;
  grid-template-columns: 1fr 1fr;
  gap: 1px;
  height: 1px;
  margin-top: auto;
`;

const FloorBar = styled.div`
  background: #f4ee4a;
`;

const Scale = styled.div`
  display: flex;
  flex-direction: column;
  padding: 11px 0 1px;
`;

const Step = styled.div`
  flex: 1 1 0;
  display: flex;
  gap: 3px;
`;

const LastStep = styled(Step)`
  flex: none;
  height: 1px;
`;

const StepTicks = styled.div`
  display: grid;
  grid-template-rows: 1fr 1fr 1fr;
  width: 4px;
`;

const StepTick = styled.div<{ $major?: boolean }>`
  width: ${(p) => (p.$major ? 4 : 2)}px;
  border-top: 1px solid #909090;
`;

const StepLabel = styled.span`
  height: 14px;
  margin-top: -8px;
  font-size: 10px;
  line-height: 14px;
`;

const SoloRow = styled.div`
  display: flex;
  gap: 35px;
  height: 28px;
  padding: 3px 0 0 31px;
`;

const Solo = styled.button`
  width: 18px;
  height: 18px;
  font-size: 10px;
  line-height: 14px;
  color: ${color.bright};
  background: ${color.well};
  border: 1px solid ${color.line};
  border-radius: 3px;
`;

const Meters = () => (
  <Panel>
    <MeterRow>
      <MeterBox>
        <ClipLights><ClipLight aria-label="Left clip" /><ClipLight aria-label="Right clip" /></ClipLights>
        <Floor><FloorBar /><FloorBar /></Floor>
      </MeterBox>
      <Scale>
        {Array.from({ length: 20 }, (_, i) => (
          <Step key={i}>
            <StepTicks><StepTick $major /><StepTick /><StepTick /></StepTicks>
            <StepLabel>{i === 0 ? "0" : `-${i * 3}`}</StepLabel>
          </Step>
        ))}
        <LastStep><StepTicks><StepTick $major /></StepTicks><StepLabel>dB</StepLabel></LastStep>
      </Scale>
    </MeterRow>
    <SoloRow><Solo>S</Solo><Solo>S</Solo></SoloRow>
  </Panel>
);

/* ---------- page ---------- */

const menus = ["File", "Edit", "Clip", "Sequence", "Markers", "Graphics", "View", "Window", "Help"];
const workspaces = ["Learning", "Assembly", "Editing", "Color", "Effects", "Audio", "Graphics", "Libraries"];

export default function App() {
  return (
    <Shell>
      <Global />
      <MenuBar>{menus.map((m) => <MenuItem key={m}>{m}</MenuItem>)}</MenuBar>
      <TopBar>
        <TopLeft>
          <Grip />
          <IconButton aria-label="Home"><Icon name="home" /></IconButton>
        </TopLeft>
        <Workspaces>
          {workspaces.map((w) => (
            <WorkspaceButton key={w} $active={w === "Effects"}>
              {w}{w === "Effects" && <Icon name="menu" tone={color.blue} />}
            </WorkspaceButton>
          ))}
          <Overflow><IconButton aria-label="More workspaces"><Icon name="more" /></IconButton></Overflow>
        </Workspaces>
        <TopRight><IconButton aria-label="Quick export"><Icon name="share" /></IconButton></TopRight>
      </TopBar>
      <Workspace>
        <Stack>
          <UpperRow><EffectControls /><Program /></UpperRow>
          <LowerRow><Project /><Tools /><Timeline /><Meters /></LowerRow>
        </Stack>
        <Effects />
      </Workspace>
    </Shell>
  );
}
